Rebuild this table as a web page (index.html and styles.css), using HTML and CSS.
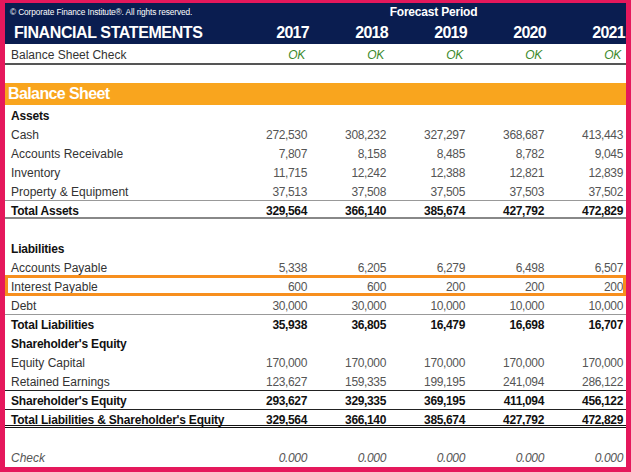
FILE: index.html
```html
<!DOCTYPE html>
<html lang="en">
<head>
    <meta charset="UTF-8">
    <meta name="viewport" content="width=device-width, initial-scale=1.0">
    <title>Financial Statements - Balance Sheet</title>
    <link rel="stylesheet" href="styles.css">
</head>
<body>
    <div class="sheet">
        <div class="row hdr-top">
            <div class="copy">© Corporate Finance Institute®. All rights reserved.</div>
            <div class="forecast">Forecast Period</div>
        </div>
        <div class="row hdr-main">
            <div class="label">FINANCIAL STATEMENTS</div>
            <div>2017</div><div>2018</div><div>2019</div><div>2020</div><div>2021</div>
        </div>
        <div class="row check-row">
            <div class="label">Balance Sheet Check</div>
            <div class="ok">OK</div><div class="ok">OK</div><div class="ok">OK</div><div class="ok">OK</div><div class="ok">OK</div>
        </div>
        <div class="gap"></div>
        <div class="band">Balance Sheet</div>

        <div class="row head"><div class="label">Assets</div></div>
        <div class="row">
            <div class="label">Cash</div>
            <div>272,530</div><div>308,232</div><div>327,297</div><div>368,687</div><div>413,443</div>
        </div>
        <div class="row">
            <div class="label">Accounts Receivable</div>
            <div>7,807</div><div>8,158</div><div>8,485</div><div>8,782</div><div>9,045</div>
        </div>
        <div class="row">
            <div class="label">Inventory</div>
            <div>11,715</div><div>12,242</div><div>12,388</div><div>12,821</div><div>12,839</div>
        </div>
        <div class="row">
            <div class="label">Property &amp; Equipment</div>
            <div>37,513</div><div>37,508</div><div>37,505</div><div>37,503</div><div>37,502</div>
        </div>
        <div class="row total total-assets">
            <div class="label">Total Assets</div>
            <div>329,564</div><div>366,140</div><div>385,674</div><div>427,792</div><div>472,829</div>
        </div>
        <div class="row"></div>

        <div class="row head"><div class="label">Liabilities</div></div>
        <div class="row">
            <div class="label">Accounts Payable</div>
            <div>5,338</div><div>6,205</div><div>6,279</div><div>6,498</div><div>6,507</div>
        </div>
        <div class="row marked">
            <div class="label">Interest Payable</div>
            <div>600</div><div>600</div><div>200</div><div>200</div><div>200</div>
        </div>
        <div class="row">
            <div class="label">Debt</div>
            <div>30,000</div><div>30,000</div><div>10,000</div><div>10,000</div><div>10,000</div>
        </div>
        <div class="row total total-liab">
            <div class="label">Total Liabilities</div>
            <div>35,938</div><div>36,805</div><div>16,479</div><div>16,698</div><div>16,707</div>
        </div>
        <div class="row head"><div class="label">Shareholder's Equity</div></div>
        <div class="row">
            <div class="label">Equity Capital</div>
            <div>170,000</div><div>170,000</div><div>170,000</div><div>170,000</div><div>170,000</div>
        </div>
        <div class="row">
            <div class="label">Retained Earnings</div>
            <div>123,627</div><div>159,335</div><div>199,195</div><div>241,094</div><div>286,122</div>
        </div>
        <div class="row total total-equity">
            <div class="label">Shareholder's Equity</div>
            <div>293,627</div><div>329,335</div><div>369,195</div><div>411,094</div><div>456,122</div>
        </div>
        <div class="row total total-all">
            <div class="label">Total Liabilities &amp; Shareholder's Equity</div>
            <div>329,564</div><div>366,140</div><div>385,674</div><div>427,792</div><div>472,829</div>
        </div>
        <div class="row"></div>
        <div class="row check">
            <div class="label">Check</div>
            <div>0.000</div><div>0.000</div><div>0.000</div><div>0.000</div><div>0.000</div>
        </div>
    </div>
</body>
</html>
```

FILE: styles.css
```css
body {
    margin: 0;
    font-family: "Liberation Sans", Arial, sans-serif;
    background-color: #fff;
}

.sheet {
    width: 631px;
    height: 472px;
    box-sizing: border-box;
    border: 5px solid #e5185c;
    border-top-width: 3px;
    background-color: #fff;
    overflow: hidden;
}

/* cells sit low in the row, like a spreadsheet */
.row {
    display: grid;
    grid-template-columns: 226px repeat(5, 79px);
    height: 19px;
    line-height: 22px;
    box-sizing: border-box;
    font-size: 12px;
    color: #555;
    position: relative;
}

.row > div {
    text-align: right;
    padding-right: 3px;
    letter-spacing: -0.35px;
    white-space: nowrap;
}

.row > .label {
    text-align: left;
    padding-left: 6px;
    padding-right: 0;
    letter-spacing: 0;
    color: #333;
}

/* header */
.hdr-top {
    background-color: #0a1d50;
    color: #fff;
    height: 18px;
    line-height: 18px;
}

.hdr-top .copy {
    grid-column: 1 / 3;
    text-align: left;
    padding-left: 5px;
    font-size: 8.3px;
    letter-spacing: -0.1px;
}

.hdr-top .forecast {
    grid-column: 3 / 6;
    text-align: center;
    padding-left: 10px;
    padding-right: 0;
    font-size: 12px;
    font-weight: bold;
    letter-spacing: -0.2px;
}

.hdr-main {
    background-color: #0a1d50;
    color: #fff;
    height: 23px;
    line-height: 23px;
    font-size: 16px;
    font-weight: bold;
}

.hdr-main > div {
    padding-right: 1px;
    letter-spacing: -0.7px;
}

.hdr-main > .label {
    color: #fff;
    padding-left: 9px;
    letter-spacing: -0.4px;
}

.check-row {
    height: 21px;
    line-height: 23px;
    border-bottom: 2px solid #555;
}

.check-row .ok {
    color: #3b8a2c;
    font-style: italic;
    padding-right: 5px;
}

.gap {
    height: 18px;
}

.band {
    height: 22px;
    line-height: 22px;
    background-color: #f9a51e;
    color: #fff;
    font-size: 16px;
    font-weight: bold;
    letter-spacing: -0.6px;
    padding-left: 3px;
}

/* body rows */
.head .label,
.total > div,
.total > .label {
    font-weight: bold;
    color: #111;
}

.head .label,
.total > .label {
    letter-spacing: -0.2px;
}

.total {
    line-height: 20px;
}

.total-assets {
    border-top: 1px solid #999;
    border-bottom: 2px solid #888;
}

.total-liab {
    border-top: 1px solid #999;
}

.total-equity {
    border-top: 1px solid #222;
}

.total-all {
    border-top: 1px solid #222;
    border-bottom: 3px double #111;
}

.marked::after {
    content: "";
    position: absolute;
    top: -1px;
    bottom: -1px;
    left: 0;
    right: 0;
    border: 3px solid #f78f1e;
}

.check > div,
.check > .label {
    font-style: italic;
    color: #555;
}
```
